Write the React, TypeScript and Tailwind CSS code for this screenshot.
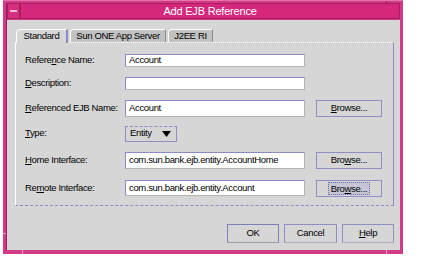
import React from 'react';

const font = "font-['Liberation_Sans',Arial,sans-serif]";
const txt = 'text-[9.5px] tracking-[-0.35px] text-black';

function Field({ value, h }: { value?: string; h: string }) {
  return (
    <div
      className={`w-[180px] shrink-0 ${h} bg-white border border-solid border-t-[#8a8acb] border-l-[#8a8acb] border-r-[#b4b4b4] border-b-[#b4b4b4] flex items-center pl-[3px] whitespace-nowrap overflow-hidden ${txt}`}
    >
      {value}
    </div>
  );
}

function BrowseButton({ mnemonic, focused }: { mnemonic: 'B' | 'w'; focused?: boolean }) {
  return (
    <div className={`ml-[11px] w-[66px] h-[17px] shrink-0 border border-[#8e8ec4] bg-[#d6d6d6] flex items-center justify-center ${txt}`}>
      <span
        className={
          focused
            ? 'px-[2px] leading-[11px] border border-dotted border-[#6a6aa8] bg-[#c6c6d6]'
            : ''
        }
      >
        {mnemonic === 'B' ? (
          <>
            <span className="underline">B</span>rowse...
          </>
        ) : (
          <>
            Bro<span className="underline">w</span>se...
          </>
        )}
      </span>
    </div>
  );
}

function Row({
  label,
  children,
  className,
}: {
  label: React.ReactNode;
  children: React.ReactNode;
  className: string;
}) {
  return (
    <div className={`flex items-center ${className}`}>
      <div className={`w-[109px] shrink-0 pl-[9px] whitespace-nowrap ${txt}`}>{label}</div>
      {children}
    </div>
  );
}

export default function App() {
  return (
    <div className={`w-[430px] h-[256px] bg-white ${font}`}>
      {/* window frame */}
      <div className="ml-[3px] w-[400px] h-[254px] bg-[#d23a86] border-t border-[#e774ad] pl-[3px] pr-[3px] pt-[2px] pb-[4px] flex flex-col relative">
        <div className="absolute left-0 top-[232px] w-[3px] h-[1px] bg-[#f3a6cc]" />
        <div className="absolute left-[19px] bottom-0 w-[1px] h-[4px] bg-[#f3a6cc]" />
        <div className="absolute right-[16px] top-0 w-[1px] h-[3px] bg-[#9c1a5a]" />
        <div className="absolute right-[16px] bottom-0 w-[1px] h-[4px] bg-[#f3a6cc]" />

        {/* title bar */}
        <div className="h-[17px] flex border-l border-[#9c1a5a]">
          <div className="w-[13px] h-[16px] bg-[#d5307f] border border-[#a61d60] flex items-center justify-center">
            <div className="w-[7px] h-[2px] bg-[#f2b8d4]" />
          </div>
          <div className="flex-1 h-[16px] bg-[#d5287c] border border-[#a61d60] flex items-center justify-center text-white text-[11px] tracking-[-0.2px]">
            Add EJB Reference
          </div>
        </div>

        {/* body */}
        <div className="flex-1 bg-[#d6d6d6] pl-[8px] pr-[6px] pt-[9px] flex flex-col border-l border-[#9c1a5a]">
          {/* tabs */}
          <div className="flex items-end h-[13px] pl-[1px]">
            <div className={`w-[52px] h-[14px] bg-[#d6d6d6] border-l border-t border-white border-r-2 border-r-[#8a8acb] rounded-tl-[5px] flex items-center justify-center -mb-[1px] relative z-10 ${txt}`}>
              Standard
            </div>
            <div className={`ml-[2px] w-[96px] h-[13px] bg-[#c2c2c2] border-l border-t border-white border-r border-r-[#8c8c8c] rounded-tl-[4px] flex items-center justify-center whitespace-nowrap ${txt}`}>
              Sun ONE App Server
            </div>
            <div className={`ml-[2px] w-[45px] h-[13px] bg-[#c2c2c2] border-l border-t border-white border-r border-r-[#8c8c8c] rounded-tl-[4px] flex items-center justify-center whitespace-nowrap ${txt}`}>
              J2EE RI
            </div>
          </div>

          {/* tab panel */}
          <div className="h-[164px] border border-solid border-t-white border-l-white border-r-[#8a8acb] border-b-[#8a8acb] [border-top-style:dotted] [border-bottom-style:dashed] flex flex-col">
            <Row
              className="mt-[10px]"
              label={
                <>
                  Refere<span className="underline">n</span>ce Name:
                </>
              }
            >
              <Field value="Account" h="h-[13px]" />
            </Row>
            <Row
              className="mt-[9px]"
              label={
                <>
                  <span className="underline">D</span>escription:
                </>
              }
            >
              <Field h="h-[13px]" />
            </Row>
            <Row
              className="mt-[9px]"
              label={
                <>
                  <span className="underline">R</span>eferenced EJB Name:
                </>
              }
            >
              <Field value="Account" h="h-[17px]" />
              <BrowseButton mnemonic="B" />
            </Row>
            <Row
              className="mt-[9px]"
              label={
                <>
                  <span className="underline">T</span>ype:
                </>
              }
            >
              <div className={`w-[52px] h-[16px] shrink-0 bg-[#d6d6d6] border border-[#8e8ec4] [border-top-style:dashed] flex items-center justify-between pl-[4px] pr-[5px] ${txt}`}>
                <span>Entity</span>
                <svg width="9" height="6" viewBox="0 0 9 6">
                  <path d="M0 0 H9 L4.5 6 Z" fill="#000" />
                </svg>
              </div>
            </Row>
            <Row
              className="mt-[10px]"
              label={
                <>
                  <span className="underline">H</span>ome Interface:
                </>
              }
            >
              <Field value="com.sun.bank.ejb.entity.AccountHome" h="h-[17px]" />
              <BrowseButton mnemonic="w" />
            </Row>
            <Row
              className="mt-[11px]"
              label={
                <>
                  Re<span className="underline">m</span>ote Interface:
                </>
              }
            >
              <Field value="com.sun.bank.ejb.entity.Account" h="h-[16px]" />
              <BrowseButton mnemonic="w" focused />
            </Row>
          </div>

          {/* dialog buttons */}
          <div className="mt-[18px] flex justify-end gap-[5px]">
            <div className={`w-[52px] h-[19px] border border-[#7e7eb8] border-b-[#9a9aa8] flex items-center justify-center ${txt}`}>
              OK
            </div>
            <div className={`w-[53px] h-[19px] border border-[#8e8ec4] border-b-[#b0b0c0] flex items-center justify-center ${txt}`}>
              Cancel
            </div>
            <div className={`w-[52px] h-[19px] border border-[#8e8ec4] border-b-[#b0b0c0] flex items-center justify-center ${txt}`}>
              <span className="underline">H</span>elp
            </div>
          </div>
        </div>
      </div>
    </div>
  );
}
